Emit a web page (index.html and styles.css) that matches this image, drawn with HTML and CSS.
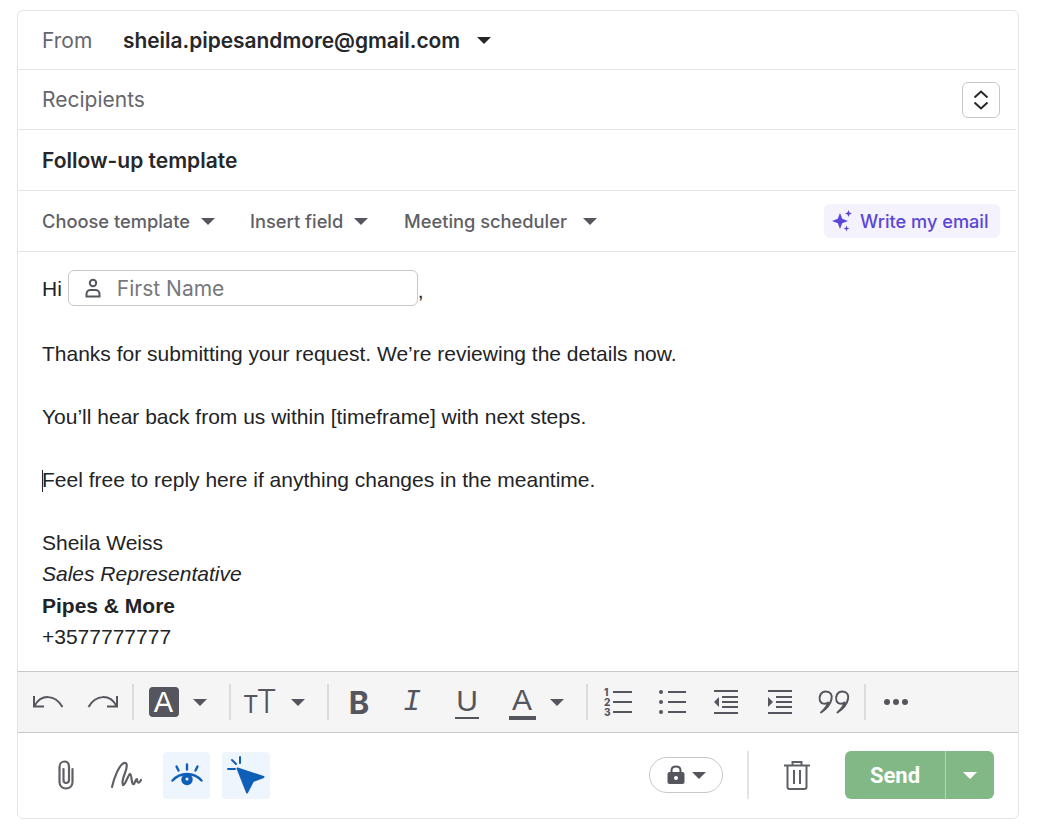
FILE: index.html
```html
<!DOCTYPE html>
<html lang="en">

<head>
    <meta charset="UTF-8">
    <meta name="viewport" content="width=device-width, initial-scale=1.0">
    <title>Compose email</title>
    <link rel="stylesheet" href="styles.css">
</head>

<body>
    <div class="composer">
        <div class="row">
            <span class="label from-label">From</span>
            <span class="from-address">sheila.pipesandmore@gmail.com</span>
            <span class="caret caret-dark from-caret"></span>
        </div>
        <div class="row row-recipients">
            <span class="label">Recipients</span>
            <button class="expand-btn" type="button">
                <svg width="18" height="22" viewBox="0 0 18 22" fill="none" stroke="#26272b" stroke-width="2"><path d="M2.500 8.500 9 2.500l6.500 6"/><path d="M2.500 13.500 9 19.500l6.500-6"/></svg>
            </button>
        </div>
        <div class="row row-subject">
            <span class="subject">Follow-up template</span>
        </div>
        <div class="row row-tools">
            <span class="menu menu-template">Choose template<span class="caret"></span></span>
            <span class="menu menu-field">Insert field<span class="caret"></span></span>
            <span class="menu menu-meeting">Meeting scheduler<span class="caret"></span></span>
            <button class="ai-btn" type="button">
                <svg width="22" height="22" viewBox="0 0 22 22" fill="#5b46d6"><path d="M8 3l2.200 5.800L16 11l-5.800 2.200L8 19l-2.200-5.800L0 11l5.800-2.200z"/><path d="M16.500 0l1 2.500 2.500 1-2.500 1-1 2.500-1-2.500-2.500-1 2.500-1z"/><path d="M14.500 15.500l.8 2.200 2.200.8-2.200.8-.8 2.200-.8-2.200-2.200-.8 2.200-.8z"/></svg>
                Write my email
            </button>
        </div>

        <div class="message">
            <div class="greeting">
                <span class="greeting-word">Hi</span>
                <span class="field-chip">
                    <svg width="20" height="22" viewBox="0 0 20 22" fill="none" stroke="#55565d" stroke-width="2"><circle cx="10" cy="6" r="3.200"/><path d="M3.500 19.500v-2.500c0-2.500 2-4 4-4h5c2 0 4 1.500 4 4v2.500z"/></svg>
                    <span class="field-name">First Name</span>
                </span>
                <span class="comma">,</span>
            </div>
            <p>Thanks for submitting your request. We’re reviewing the details now.</p>
            <p>You’ll hear back from us within [timeframe] with next steps.</p>
            <p><span class="text-cursor"></span>Feel free to reply here if anything changes in the meantime.</p>
            <div class="signature">
                <div>Sheila Weiss</div>
                <div><em>Sales Representative</em></div>
                <div><strong>Pipes &amp; More</strong></div>
                <div>+3577777777</div>
            </div>
        </div>

        <div class="format-bar">
            <span class="tool tool-undo">
                <svg width="32" height="16" viewBox="0 0 32 16" fill="none" stroke="#55565d" stroke-width="2"><path d="M2 2v10.500h10"/><path d="M2.500 12C9 0 23 0 30.500 13"/></svg>
            </span>
            <span class="tool tool-redo">
                <svg width="32" height="16" viewBox="0 0 32 16" fill="none" stroke="#55565d" stroke-width="2"><path d="M30 2v10.500H20"/><path d="M29.500 12C23 0 9 0 1.500 13"/></svg>
            </span>
            <span class="sep"></span>
            <span class="tool tool-color"><span class="color-box">A</span></span>
            <span class="caret"></span>
            <span class="sep sep-after-caret"></span>
            <span class="tool tool-size"><span class="size-small">T</span><span class="size-big">T</span></span>
            <span class="caret caret-size"></span>
            <span class="sep sep-after-caret"></span>
            <span class="tool tool-bold">B</span>
            <span class="tool tool-italic">I</span>
            <span class="tool tool-underline"><span>U</span></span>
            <span class="tool tool-font-color"><span>A</span></span>
            <span class="caret caret-font"></span>
            <span class="sep sep-after-caret"></span>
            <span class="tool tool-ol">
                <svg width="30" height="30" viewBox="0 0 30 30" fill="none" stroke="#55565d" stroke-width="2"><text x="1" y="9" class="list-num">1</text><text x="1" y="19" class="list-num">2</text><text x="1" y="29" class="list-num">3</text><path d="M10 5h19M10 15h19M10 25h19"/></svg>
            </span>
            <span class="tool tool-ul">
                <svg width="30" height="30" viewBox="0 0 30 30" fill="none" stroke="#55565d" stroke-width="2"><circle cx="3" cy="5" r="2" fill="#55565d" stroke="none"/><circle cx="3" cy="15" r="2" fill="#55565d" stroke="none"/><circle cx="3" cy="25" r="2" fill="#55565d" stroke="none"/><path d="M10 5h18M10 15h18M10 25h18"/></svg>
            </span>
            <span class="tool tool-outdent">
                <svg width="26" height="26" viewBox="0 0 26 26" fill="none" stroke="#55565d" stroke-width="2"><path d="M1 2h24M9 8h16M9 13h16M9 18h16M1 24h24"/><path d="M6 8v10l-5-5z" fill="#55565d" stroke="none"/></svg>
            </span>
            <span class="tool tool-indent">
                <svg width="26" height="26" viewBox="0 0 26 26" fill="none" stroke="#55565d" stroke-width="2"><path d="M1 2h24M9 8h16M9 13h16M9 18h16M1 24h24"/><path d="M1 8v10l5-5z" fill="#55565d" stroke="none"/></svg>
            </span>
            <span class="tool tool-quote">
                <svg width="34" height="24" viewBox="0 0 34 24" fill="none" stroke="#55565d" stroke-width="2" stroke-linejoin="round"><path d="M3 11C1.500 6 4 1.500 9 1.500c4.500 0 6.500 3.500 5.500 7.500-1 5-5.500 10-10.500 13.500 3.500-3 6-6 7-10-3 2-6.500 1.500-8-1.500z"/><path d="M19.500 11C18 6 20.500 1.500 25.500 1.500c4.500 0 6.500 3.500 5.500 7.500-1 5-5.500 10-10.500 13.500 3.500-3 6-6 7-10-3 2-6.500 1.500-8-1.500z"/></svg>
            </span>
            <span class="sep sep-quote"></span>
            <span class="tool tool-more">
                <svg width="26" height="8" viewBox="0 0 26 8" fill="#55565d"><circle cx="4" cy="4" r="3"/><circle cx="13" cy="4" r="3"/><circle cx="22" cy="4" r="3"/></svg>
            </span>
        </div>

        <div class="footer">
            <span class="foot-icon foot-clip">
                <svg width="16" height="30" viewBox="0 0 16 30" fill="none" stroke="#5f6066" stroke-width="2.200" stroke-linecap="round"><path d="M14.500 9v13c0 4-3 6.500-6.500 6.500S1.500 26 1.500 22V7c0-3.500 2.500-5.500 5-5.500S11 3.500 11 7v13c0 2-1.500 3-3 3s-2.500-1-2.500-3V9"/></svg>
            </span>
            <span class="foot-icon foot-sign">
                <svg width="32" height="28" viewBox="0 0 32 28" fill="none" stroke="#5f6066" stroke-width="2.200" stroke-linecap="round" stroke-linejoin="round"><path d="M2 26C4 17 9 4 14 2c4-1 3 5 1 10-2 5-3 10-2 12 2 1 5-10 7-11 2 0 1 9 3 10 2 1 2-5 4-5 0 4 2 5 4 1"/></svg>
            </span>
            <span class="track-btn track-eye">
                <svg width="32" height="24" viewBox="0 0 32 24" fill="none" stroke="#0f5fb8" stroke-width="2.400" stroke-linecap="round"><path d="M1.500 17.500C6 12.500 11 11 16 11s10 1.500 14.500 6.500"/><circle cx="16" cy="16.500" r="5.700" fill="#0f5fb8" stroke="none"/><circle cx="16" cy="16" r="1.500" fill="#eef5fd" stroke="none"/><path d="M16 1.500v5M5.500 3.500l2 4M26.500 3.500l-2 4"/></svg>
            </span>
            <span class="track-btn track-click">
                <svg width="40" height="40" viewBox="0 0 40 40" fill="none" stroke="#0f5fb8" stroke-width="2" stroke-linecap="round" stroke-linejoin="round"><path d="M11.500 13.500 37.500 22 27 26l-6 11.500z" fill="#0f5fb8"/><path d="M6 5l4 4M14 2v6M2 14h7"/></svg>
            </span>
            <span class="privacy-pill">
                <svg width="18" height="20" viewBox="0 0 18 20" fill="none"><path d="M4.500 8V5.500C4.500 3 6.500 1.500 9 1.500s4.500 1.500 4.500 4V8" stroke="#55565d" stroke-width="2"/><rect x="0.500" y="7" width="17" height="12" rx="2" fill="#55565d"/><circle cx="9" cy="13" r="2" fill="#fff"/></svg>
                <span class="caret"></span>
            </span>
            <span class="foot-sep"></span>
            <span class="foot-icon foot-trash">
                <svg width="26" height="30" viewBox="0 0 26 30" fill="none" stroke="#5f6066" stroke-width="2"><path d="M0 5.500h26"/><path d="M8.500 5V2h9v3"/><path d="M3.500 6v21c0 1 .7 2 2 2h15c1.300 0 2-1 2-2V6"/><path d="M10 10v14M16 10v14"/></svg>
            </span>
            <div class="send-btn">
                <span class="send-label">Send</span>
                <span class="send-more"><span class="caret caret-white"></span></span>
            </div>
        </div>
    </div>
</body>

</html>
```

FILE: styles.css
```css
body {
    font-family: 'Liberation Sans', Arial, sans-serif;
    background-color: #ffffff;
    margin: 0;
    padding: 10px 18px 4px 17px;
}

button {
    font-family: inherit;
    cursor: pointer;
}

.composer {
    width: 1000px;
    height: 807px;
    border: 1px solid #e4e4e6;
    border-radius: 6px;
    display: flex;
    flex-direction: column;
    font-family: Inter, sans-serif;
}

.row {
    display: flex;
    align-items: center;
    height: 58px;
    padding: 0 16px 0 24px;
    margin-right: 2px;
    border-bottom: 1px solid #e4e4e6;
    flex-shrink: 0;
}

.row-recipients {
    height: 59px;
    justify-content: space-between;
}

.row-subject {
    height: 60px;
}

.row-tools {
    height: 60px;
}

.label {
    color: #65666c;
    font-size: 21px;
}

.from-label {
    width: 81px;
}

.from-address {
    font-size: 20.9px;
    font-weight: 600;
    color: #26272b;
}

.from-caret {
    margin-left: 17px;
}

.caret {
    display: inline-block;
    width: 0;
    height: 0;
    border-left: 7px solid transparent;
    border-right: 7px solid transparent;
    border-top: 7px solid #55565d;
    flex-shrink: 0;
}

.caret-dark {
    border-top-color: #26272b;
}

.caret-white {
    border-top-color: #ffffff;
}

.expand-btn {
    width: 38px;
    height: 36px;
    padding: 0;
    background: #ffffff;
    border: 1px solid #c8c8cc;
    border-radius: 6px;
    display: flex;
    align-items: center;
    justify-content: center;
}

.subject {
    font-size: 21px;
    font-weight: 600;
    color: #26272b;
}

.menu {
    display: flex;
    align-items: center;
    gap: 11px;
    font-size: 18.3px;
    font-weight: 500;
    color: #5f6066;
}

.menu-template {
    width: 208px;
}

.menu-field {
    width: 154px;
}

.menu-meeting .caret {
    margin-left: 5px;
}

.ai-btn {
    margin-left: auto;
    width: 176px;
    height: 34px;
    padding: 0 0 0 8px;
    border: none;
    border-radius: 6px;
    background: #f3f2fd;
    color: #5b46d6;
    font-size: 18.2px;
    font-weight: 500;
    display: flex;
    align-items: center;
    gap: 6px;
}

.message {
    flex: 1;
    padding: 18px 24px 0;
    font-family: 'Liberation Sans', Arial, sans-serif;
    font-size: 21px;
    line-height: 31.5px;
    color: #222326;
}

.message p {
    margin: 0 0 31.5px;
}

.greeting {
    display: flex;
    align-items: center;
    gap: 6px;
    height: 36px;
    margin-bottom: 31.5px;
}

.greeting-word {
    padding-top: 2px;
}

.field-chip {
    width: 334px;
    height: 34px;
    border: 1px solid #c8c8cc;
    border-radius: 6px;
    display: flex;
    align-items: center;
    gap: 14px;
    padding-left: 14px;
    font-family: Inter, sans-serif;
    font-size: 21px;
    color: #77787e;
}

.field-name {
    padding-top: 2px;
}

.comma {
    margin: 6px 0 0 -6px;
}

.text-cursor {
    display: inline-block;
    width: 1px;
    height: 22px;
    margin-right: -1px;
    background: #222326;
    vertical-align: -5px;
}

.format-bar {
    height: 60px;
    flex-shrink: 0;
    display: flex;
    align-items: center;
    padding-left: 2px;
    background: #f5f5f6;
    border-top: 1px solid #c8c8cc;
    border-bottom: 1px solid #c8c8cc;
    color: #55565d;
}

.tool {
    height: 36px;
    display: flex;
    align-items: center;
    justify-content: center;
    flex-shrink: 0;
}

.sep {
    width: 2px;
    height: 36px;
    background: #dcdcde;
    flex-shrink: 0;
    margin-left: 2px;
}

.sep-after-caret {
    margin-left: 22px;
}

.sep-quote {
    margin-left: 2px;
}

.tool-undo,
.tool-redo {
    width: 55px;
}

.tool-color {
    width: 59px;
}

.color-box {
    width: 30px;
    height: 30px;
    background: #55565d;
    color: #ffffff;
    border-radius: 4px;
    font-family: 'Liberation Sans', sans-serif;
    font-size: 29px;
    line-height: 30px;
    text-align: center;
}

.tool-size {
    width: 58px;
    align-items: baseline;
    font-family: Inter, sans-serif;
    font-weight: 300;
}

.size-small {
    font-size: 24px;
    font-weight: 400;
    letter-spacing: -2px;
}

.size-big {
    font-size: 32px;
    line-height: 36px;
}

.caret-size {
    margin-left: 2px;
}

.tool-bold {
    width: 60px;
    font-family: Inter, sans-serif;
    font-weight: 700;
    font-size: 31px;
}

.tool-italic {
    width: 46px;
    font-family: 'Liberation Mono', monospace;
    font-style: italic;
    font-size: 30px;
}

.tool-underline {
    width: 64px;
}

.tool-underline span,
.tool-font-color span {
    font-family: 'Liberation Sans', sans-serif;
    font-size: 30px;
    line-height: 30px;
    height: 31px;
    text-align: center;
}

.tool-underline span {
    width: 24px;
    border-bottom: 2px solid #55565d;
}

.tool-font-color {
    width: 46px;
}

.tool-font-color span {
    width: 27px;
    border-bottom: 4px solid #55565d;
}

.caret-font {
    margin-left: 5px;
}

.list-num {
    font-family: Inter, sans-serif;
    font-size: 10px;
    font-weight: 800;
    fill: #55565d;
    stroke: none;
}

.tool-ol {
    width: 60px;
}

.tool-ul {
    width: 50px;
}

.tool-outdent {
    width: 56px;
}

.tool-indent {
    width: 52px;
}

.tool-quote {
    width: 56px;
}

.tool-more {
    width: 60px;
}

.footer {
    height: 84px;
    padding-bottom: 1px;
    flex-shrink: 0;
    display: flex;
    align-items: center;
    color: #5f6066;
}

.foot-icon {
    display: flex;
    align-items: center;
    justify-content: center;
    flex-shrink: 0;
}

.foot-clip {
    width: 16px;
    margin-left: 40px;
}

.foot-sign {
    width: 32px;
    margin-left: 36px;
}

.track-btn {
    width: 47px;
    height: 47px;
    background: #eef5fd;
    border-radius: 4px;
    display: flex;
    align-items: center;
    justify-content: center;
}

.track-eye {
    margin-left: 21px;
}

.track-click {
    width: 48px;
    margin-left: 12px;
}

.privacy-pill {
    margin-left: 379px;
    width: 72px;
    height: 34px;
    border: 1px solid #c8c8cc;
    border-radius: 18px;
    display: flex;
    align-items: center;
    justify-content: center;
    gap: 7px;
}

.foot-sep {
    width: 2px;
    height: 48px;
    margin-left: 24px;
    background: #e4e4e6;
}

.foot-trash {
    width: 26px;
    margin-left: 35px;
}

.send-btn {
    margin-left: 35px;
    width: 149px;
    height: 48px;
    background: #82b886;
    border-radius: 6px;
    display: flex;
    color: #ffffff;
    font-family: Roboto, sans-serif;
    font-size: 22px;
    font-weight: 700;
}

.send-label {
    width: 100px;
    display: flex;
    align-items: center;
    justify-content: center;
    border-right: 1px solid #b5d5b7;
}

.send-more {
    flex: 1;
    display: flex;
    align-items: center;
    justify-content: center;
}
```
